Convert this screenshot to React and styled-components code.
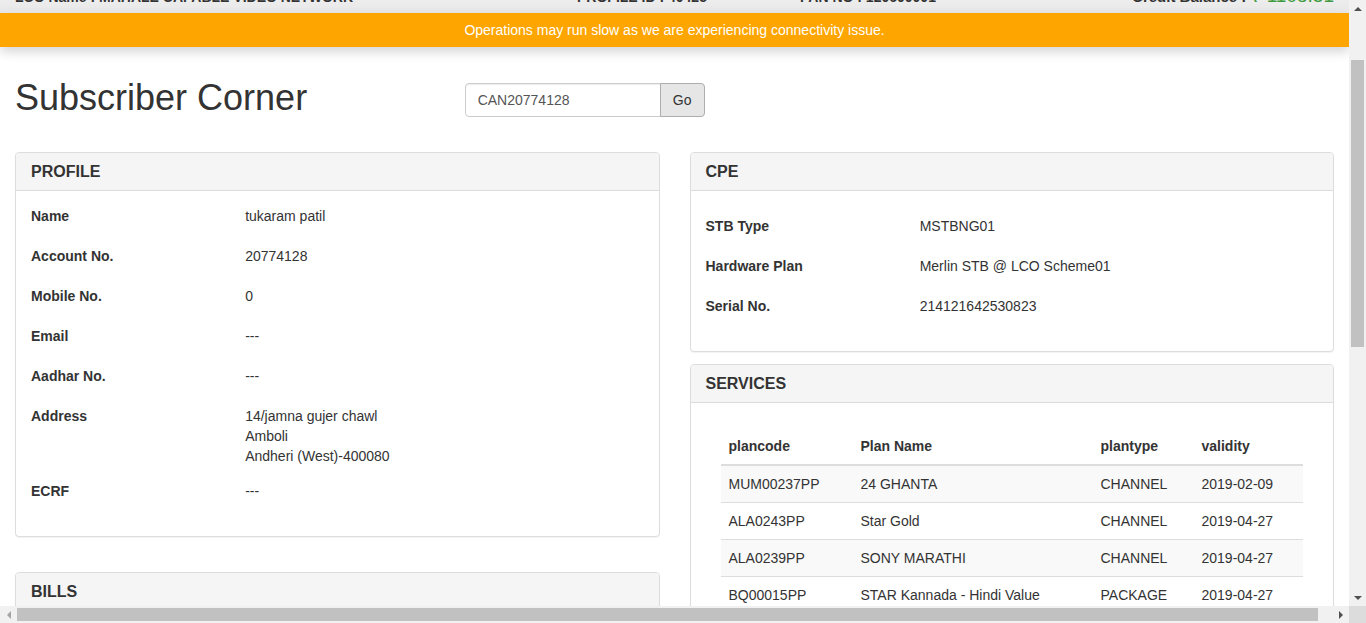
import React, { useLayoutEffect, useRef } from "react";
import styled, { createGlobalStyle } from "styled-components";

const GlobalStyle = createGlobalStyle`
  html, body {
    margin: 0;
    padding: 0;
    height: 100%;
    overflow: hidden;
  }
  body {
    font-family: "Liberation Sans", Arial, Helvetica, sans-serif;
    font-size: 14px;
    line-height: 20px;
    color: #333;
    background: #fff;
  }
  *, *::before, *::after {
    box-sizing: border-box;
  }
`;

const profile = [
  { label: "Name", value: ["tukaram patil"] },
  { label: "Account No.", value: ["20774128"] },
  { label: "Mobile No.", value: ["0"] },
  { label: "Email", value: ["---"] },
  { label: "Aadhar No.", value: ["---"] },
  {
    label: "Address",
    value: ["14/jamna gujer chawl", "Amboli", "Andheri (West)-400080"],
  },
  { label: "ECRF", value: ["---"] },
];

const cpe = [
  { label: "STB Type", value: ["MSTBNG01"] },
  { label: "Hardware Plan", value: ["Merlin STB @ LCO Scheme01"] },
  { label: "Serial No.", value: ["214121642530823"] },
];

const services = [
  ["MUM00237PP", "24 GHANTA", "CHANNEL", "2019-02-09"],
  ["ALA0243PP", "Star Gold", "CHANNEL", "2019-04-27"],
  ["ALA0239PP", "SONY MARATHI", "CHANNEL", "2019-04-27"],
  ["BQ00015PP", "STAR Kannada - Hindi Value", "PACKAGE", "2019-04-27"],
  ["ALA0112PP", "Zee Marathi", "CHANNEL", "2019-04-27"],
  ["BQ00021PP", "DD Free Channels", "PACKAGE", "2019-04-27"],
];

const bills = [
  ["2019-03-27", "153.40", "PAID"],
  ["2019-02-27", "153.40", "PAID"],
  ["2019-01-27", "153.40", "PAID"],
];

const Frame = styled.div`
  display: grid;
  grid-template-columns: 1fr 17px;
  grid-template-rows: 1fr 17px;
  width: 100vw;
  height: 100vh;
`;

const Viewport = styled.div`
  overflow: hidden;
  min-width: 0;
  min-height: 0;
`;

const Navbar = styled.header`
  height: 50px;
  display: grid;
  grid-template-columns: 562px 223px 1fr auto;
  align-items: end;
  padding: 0 15px 6px;
  background: linear-gradient(to bottom, #ffffff 0%, #e7e7e7 100%);
  font-weight: 700;
  font-size: 14px;
  color: #333;
`;

const NavText = styled.span`
  white-space: nowrap;
`;

const Credit = styled.span`
  white-space: nowrap;
  font-size: 15px;
`;

const Amount = styled.span`
  color: #3c9a3c;
  font-size: 19px;
  font-weight: 400;
`;

const Banner = styled.div`
  position: relative;
  z-index: 2;
  height: 34px;
  line-height: 34px;
  background: #ffa500;
  color: #fff;
  text-align: center;
  font-size: 14px;
  box-shadow: 0 5px 10px rgba(0, 0, 0, 0.16);
`;

const Content = styled.main`
  padding: 31px 15px 0;
`;

const HeaderRow = styled.div`
  display: grid;
  grid-template-columns: repeat(3, 1fr);
  column-gap: 30px;
  margin-bottom: 34px;
`;

const Title = styled.h1`
  margin: 0;
  font-size: 36px;
  line-height: 40px;
  font-weight: 400;
  color: #333;
  white-space: nowrap;
`;

const Search = styled.form`
  display: flex;
  margin-top: 5px;
`;

const SearchInput = styled.input`
  width: 196px;
  height: 34px;
  padding: 6px 12px;
  border: 1px solid #ccc;
  border-radius: 4px 0 0 4px;
  box-shadow: inset 0 1px 1px rgba(0, 0, 0, 0.075);
  font-family: inherit;
  font-size: 14px;
  color: #555;
  outline: none;
`;

const GoButton = styled.button`
  width: 45px;
  height: 34px;
  margin-left: -1px;
  border: 1px solid #adadad;
  border-radius: 0 4px 4px 0;
  background: #e6e6e6;
  font-family: inherit;
  font-size: 14px;
  color: #333;
`;

const Columns = styled.div`
  display: grid;
  grid-template-columns: 1fr 1fr;
  column-gap: 30px;
  align-items: start;
`;

const Column = styled.div`
  display: flex;
  flex-direction: column;
`;

const Panel = styled.section`
  border: 1px solid #ddd;
  border-radius: 4px;
  background: #fff;
  box-shadow: 0 1px 1px rgba(0, 0, 0, 0.05);
  margin-bottom: ${(p) => p.$spacing ?? 20}px;
`;

const PanelHeading = styled.div`
  padding: 10px 15px;
  background: #f5f5f5;
  border-bottom: 1px solid #ddd;
  border-radius: 3px 3px 0 0;
`;

const PanelTitle = styled.h3`
  margin: 0;
  font-size: 16px;
  line-height: 17px;
  font-weight: 700;
  color: #333;
`;

const PanelBody = styled.div`
  padding: ${(p) => p.$top ?? 15}px ${(p) => p.$side ?? 15}px 15px;
`;

const InfoRow = styled.div`
  display: grid;
  grid-template-columns: 33.3333% 66.6667%;
  margin: 0 -15px 15px;

  & > * {
    padding: 0 15px;
  }
`;

const Label = styled.div`
  font-weight: 700;
  padding-bottom: 5px;
`;

const Value = styled.div``;

const Table = styled.table`
  width: 100%;
  border-collapse: collapse;

  th {
    text-align: left;
    font-weight: 700;
    padding: 8px;
    border-bottom: 2px solid #ddd;
    white-space: nowrap;
  }

  td {
    padding: 8px;
    border-top: 1px solid #ddd;
    white-space: nowrap;
  }

  tbody tr:first-child td {
    border-top: 0;
  }

  tbody tr:nth-child(odd) {
    background: #f9f9f9;
  }
`;

const VBar = styled.div`
  grid-row: 1;
  grid-column: 2;
  display: flex;
  flex-direction: column;
  background: #f1f1f1;
`;

const HBar = styled.div`
  grid-row: 2;
  grid-column: 1;
  display: flex;
  background: #f1f1f1;
`;

const Corner = styled.div`
  background: #dcdcdc;
`;

const ArrowBox = styled.div`
  flex: none;
  width: 17px;
  height: 17px;
  display: flex;
  align-items: center;
  justify-content: center;
  color: ${(p) => (p.$disabled ? "#a3a3a3" : "#505050")};
`;

const VTrack = styled.div`
  flex: 1;
  padding-top: 43px;
`;

const VThumb = styled.div`
  width: 13px;
  height: 287px;
  margin: 0 auto;
  background: #c1c1c1;
`;

const HTrack = styled.div`
  flex: 1;
  display: flex;
  align-items: center;
`;

const HThumb = styled.div`
  width: 1301px;
  height: 13px;
  background: #c1c1c1;
`;

const arrowPoints = {
  up: "0,4 4,0 8,4",
  down: "0,0 8,0 4,4",
  left: "4,0 4,8 0,4",
  right: "0,0 4,4 0,8",
};

const Arrow = ({ dir, disabled }) => {
  const vertical = dir === "up" || dir === "down";
  return (
    <ArrowBox $disabled={disabled}>
      <svg
        width={vertical ? 8 : 4}
        height={vertical ? 4 : 8}
        viewBox={vertical ? "0 0 8 4" : "0 0 4 8"}
      >
        <polygon points={arrowPoints[dir]} fill="currentColor" />
      </svg>
    </ArrowBox>
  );
};

const InfoList = ({ rows }) =>
  rows.map((row) => (
    <InfoRow key={row.label}>
      <Label>{row.label}</Label>
      <Value>
        {row.value.map((line) => (
          <div key={line}>{line}</div>
        ))}
      </Value>
    </InfoRow>
  ));

const App = () => {
  const viewRef = useRef(null);

  useLayoutEffect(() => {
    if (viewRef.current) viewRef.current.scrollTop = 37;
  }, []);

  return (
    <>
      <GlobalStyle />
      <Frame>
        <Viewport ref={viewRef}>
          <Navbar>
            <NavText>LCO Name : MAHALE CAPABLE VIDEO NETWORK</NavText>
            <NavText>PROFILE ID : 40425</NavText>
            <NavText>PAN NO : 120600001</NavText>
            <Credit>
              Credit Balance : <Amount>₹ 1108.51</Amount>
            </Credit>
          </Navbar>
          <Banner>
            Operations may run slow as we are experiencing connectivity issue.
          </Banner>
          <Content>
            <HeaderRow>
              <Title>Subscriber Corner</Title>
              <Search onSubmit={(e) => e.preventDefault()}>
                <SearchInput defaultValue="CAN20774128" />
                <GoButton type="submit">Go</GoButton>
              </Search>
            </HeaderRow>

            <Columns>
              <Column>
                <Panel $spacing={35}>
                  <PanelHeading>
                    <PanelTitle>PROFILE</PanelTitle>
                  </PanelHeading>
                  <PanelBody>
                    <InfoList rows={profile} />
                  </PanelBody>
                </Panel>
                <Panel>
                  <PanelHeading>
                    <PanelTitle>BILLS</PanelTitle>
                  </PanelHeading>
                  <PanelBody $top={25} $side={30}>
                    <Table>
                      <thead>
                        <tr>
                          <th>bill date</th>
                          <th>amount</th>
                          <th>status</th>
                        </tr>
                      </thead>
                      <tbody>
                        {bills.map((b) => (
                          <tr key={b[0]}>
                            {b.map((c, i) => (
                              <td key={i}>{c}</td>
                            ))}
                          </tr>
                        ))}
                      </tbody>
                    </Table>
                  </PanelBody>
                </Panel>
              </Column>

              <Column>
                <Panel $spacing={12}>
                  <PanelHeading>
                    <PanelTitle>CPE</PanelTitle>
                  </PanelHeading>
                  <PanelBody $top={25}>
                    <InfoList rows={cpe} />
                  </PanelBody>
                </Panel>
                <Panel>
                  <PanelHeading>
                    <PanelTitle>SERVICES</PanelTitle>
                  </PanelHeading>
                  <PanelBody $top={25} $side={30}>
                    <Table>
                      <thead>
                        <tr>
                          <th style={{ width: 132 }}>plancode</th>
                          <th style={{ width: 240 }}>Plan Name</th>
                          <th style={{ width: 101 }}>plantype</th>
                          <th>validity</th>
                        </tr>
                      </thead>
                      <tbody>
                        {services.map((s) => (
                          <tr key={s[0]}>
                            {s.map((c, i) => (
                              <td key={i}>{c}</td>
                            ))}
                          </tr>
                        ))}
                      </tbody>
                    </Table>
                  </PanelBody>
                </Panel>
              </Column>
            </Columns>
          </Content>
        </Viewport>

        <VBar>
          <Arrow dir="up" />
          <VTrack>
            <VThumb />
          </VTrack>
          <Arrow dir="down" />
        </VBar>
        <HBar>
          <Arrow dir="left" disabled />
          <HTrack>
            <HThumb />
          </HTrack>
          <Arrow dir="right" />
        </HBar>
        <Corner />
      </Frame>
    </>
  );
};

export default App;
